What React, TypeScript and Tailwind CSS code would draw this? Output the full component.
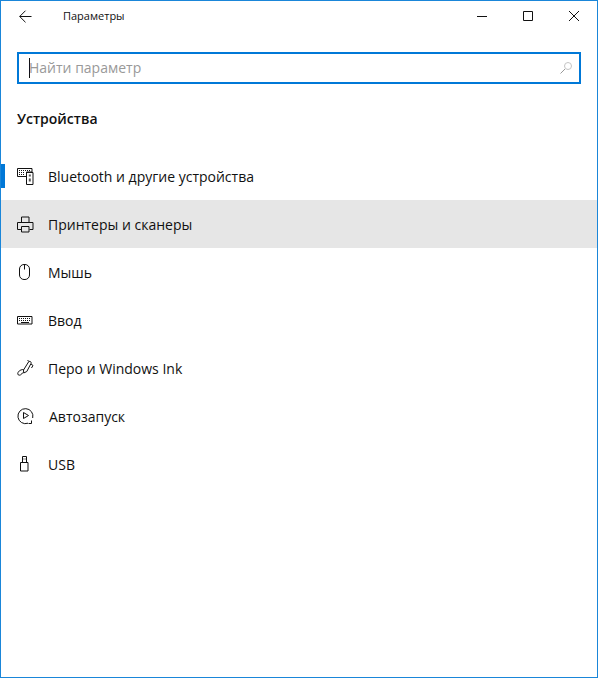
import React from "react";

const s = { fill: "none", stroke: "#111", strokeWidth: 1 } as const;

const Device = () => (
  <svg width="18" height="18" viewBox="0 0 18 18" {...s}>
    <path d="M.5 1.500h14.500v3.500H9.500v4.500H.5z" />
    <path d="M2 3.500h12M2 5.500h6M2 7.500h6" strokeDasharray="1 1" />
    <path d="M9.500 5.500h6.500v12H9.500z" />
    <path d="M12.800 7.500v2M12.800 11.500v3" strokeWidth="2" stroke="#555" />
  </svg>
);
const Printer = () => (
  <svg width="18" height="18" viewBox="0 0 18 18" {...s}>
    <path d="M4.500 7.500v-5.500h7.500v5.500" />
    <path d="M4 14.500H.5V7.500h15.500v7h-3.500" />
    <path d="M4.500 11.500h7.500v5.500H4.500z" />
  </svg>
);
const Mouse = () => (
  <svg width="18" height="18" viewBox="0 0 18 18" {...s}>
    <path d="M2.500 6a4.500 4.500 0 0 1 4.500-4.500h1A4.500 4.500 0 0 1 12.500 6v6A4.500 4.500 0 0 1 8 16.500H7A4.500 4.500 0 0 1 2.500 12z" />
    <path d="M7.500 1.500v5" />
  </svg>
);
const Keyboard = () => (
  <svg width="18" height="18" viewBox="0 0 18 18" {...s}>
    <path d="M.5 5.500h14.500v7.500H.5z" />
    <path d="M2 7.500h12M2 9.500h12" strokeDasharray="1 1" />
    <path d="M4 11.500h8" />
  </svg>
);
const Pen = () => (
  <svg width="18" height="18" viewBox="0 0 18 18" {...s}>
    <path d="M6.500 11 11.500 3c.8-1.300 3.300-.3 2.600 1.300L9.800 12.500 6.700 14z" />
    <path d="M10.500 1.500 12.500 2.500M14 5l2 1.500-1.500 2.500" />
    <path d="M6.500 10.500C3 10.500.5 13 .8 15c.3 2 3.500 1.500 5-1.500" />
  </svg>
);
const Play = () => (
  <svg width="18" height="18" viewBox="0 0 18 18" {...s}>
    <path d="M11 16.200A7.500 7.500 0 1 1 15.700 11" />
    <path d="M6.500 5.500v6l5-3z" />
    <path d="M11.500 16.500h3v-3" />
  </svg>
);
const Usb = () => (
  <svg width="18" height="18" viewBox="0 0 18 18" {...s}>
    <path d="M3.500 7.500h7.500v8.500H3.500z" />
    <path d="M5.500 1.500h4v6h-4z" />
    <path d="M6.500 4h.8M7.800 4h.8" />
  </svg>
);

const items = [
  { label: "Bluetooth и другие устройства", Icon: Device, selected: true },
  { label: "Принтеры и сканеры", Icon: Printer, hover: true },
  { label: "Мышь", Icon: Mouse },
  { label: "Ввод", Icon: Keyboard },
  { label: "Перо и Windows Ink", Icon: Pen },
  { label: "Автозапуск", Icon: Play, shift: true },
  { label: "USB", Icon: Usb },
];

export default function App() {
  return (
    <div className="w-[598px] h-[678px] bg-white border border-[#1a86d9] text-[#111] font-['Open_Sans','Noto_Sans',sans-serif] overflow-hidden">
      <div className="h-[31px] flex items-center">
        <div className="w-[47px] pl-[18px] flex">
          <svg width="13" height="13" viewBox="0 0 13 13" fill="none" stroke="#111" strokeWidth="1">
            <path d="M12.500 6.500H.7M6.500.7.7 6.500l5.800 5.800" />
          </svg>
        </div>
        <span className="ml-[15px] text-[11px]">Параметры</span>
        <div className="ml-auto h-[30px] self-start flex items-center">
          <svg className="mr-[36px]" width="10" height="10" viewBox="0 0 10 10" stroke="#111" fill="none"><path d="M0 5.500h10" /></svg>
          <svg className="mr-[36px]" width="10" height="10" viewBox="0 0 10 10" stroke="#111" fill="none"><path d="M.5.500h9v9H.5z" /></svg>
          <svg className="mr-[18px]" width="10" height="10" viewBox="0 0 10 10" stroke="#111" fill="none"><path d="m0 0 10 10M10 0 0 10" /></svg>
        </div>
      </div>

      <div className="mt-[20px] ml-[16px] mr-[16px] h-[32px] border-2 border-[#0078d7] flex items-center pl-[10px] pr-[7px]">
        <span className="w-px h-[20px] bg-[#111]" />
        <span className="-ml-px pb-[2px] text-[14px] text-[#999999]">Найти параметр</span>
        <svg className="ml-auto" width="12" height="12" viewBox="0 0 12 12" fill="none" stroke="#999">
          <circle cx="8" cy="4" r="3.500" stroke="#c4c4c4" />
          <path d="M5 7 .5 11.500" />
        </svg>
      </div>

      <h1 className="mt-[25px] ml-[16px] h-[20px] leading-[20px] text-[14px] font-semibold">Устройства</h1>

      <div className="mt-[23px] flex flex-col">
        {items.map(({ label, Icon, selected, hover, shift }) => (
          <div key={label} className={`h-[48px] flex items-center relative ${hover ? "bg-[#e6e6e6]" : ""}`}>
            {selected && <span className="absolute left-0 top-[12px] w-[4px] h-[24px] bg-[#0078d7]" />}
            <span className="ml-[16px] w-[18px] h-[18px] flex"><Icon /></span>
            <span className={`${shift ? "ml-[14px]" : "ml-[13px]"} text-[14px]`}>{label}</span>
          </div>
        ))}
      </div>
    </div>
  );
}
